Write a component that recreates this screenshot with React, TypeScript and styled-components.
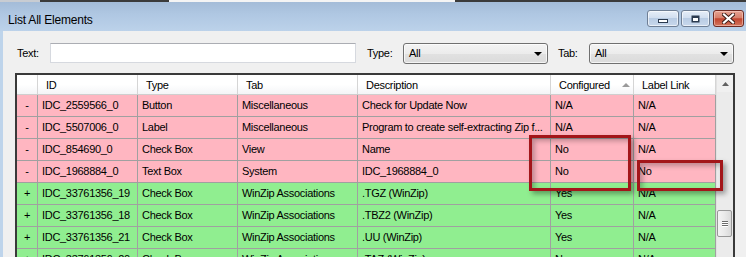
import styled, { createGlobalStyle } from 'styled-components'

const GlobalStyle = createGlobalStyle`
  html, body {
    margin: 0;
    padding: 0;
    overflow: hidden;
    background: #bed4eb;
  }
  body {
    font-family: 'Liberation Sans', Arial, sans-serif;
  }
`

type Row = {
  sign: '-' | '+'
  id: string
  type: string
  tab: string
  desc: string
  configured: string
  link: string
}

const rows: Row[] = [
  { sign: '-', id: 'IDC_2559566_0', type: 'Button', tab: 'Miscellaneous', desc: 'Check for Update Now', configured: 'N/A', link: 'N/A' },
  { sign: '-', id: 'IDC_5507006_0', type: 'Label', tab: 'Miscellaneous', desc: 'Program to create self-extracting Zip f...', configured: 'N/A', link: 'N/A' },
  { sign: '-', id: 'IDC_854690_0', type: 'Check Box', tab: 'View', desc: 'Name', configured: 'No', link: 'N/A' },
  { sign: '-', id: 'IDC_1968884_0', type: 'Text Box', tab: 'System', desc: 'IDC_1968884_0', configured: 'No', link: 'No' },
  { sign: '+', id: 'IDC_33761356_19', type: 'Check Box', tab: 'WinZip Associations', desc: '.TGZ (WinZip)', configured: 'Yes', link: 'N/A' },
  { sign: '+', id: 'IDC_33761356_18', type: 'Check Box', tab: 'WinZip Associations', desc: '.TBZ2 (WinZip)', configured: 'Yes', link: 'N/A' },
  { sign: '+', id: 'IDC_33761356_21', type: 'Check Box', tab: 'WinZip Associations', desc: '.UU (WinZip)', configured: 'Yes', link: 'N/A' },
  { sign: '+', id: 'IDC_33761356_20', type: 'Check Box', tab: 'WinZip Associations', desc: '.TAZ (WinZip)', configured: 'No', link: 'N/A' },
]

const COLS = '21px 100px 100px 120px 193px 83px 82px'

function App () {
  return (
    <>
      <GlobalStyle />
      <Window>
        <TopStrip />
        <TitleBar>
          <Title>List All Elements</Title>
          <CaptionButtons>
            <CaptionButton>
              <svg width="10" height="4" viewBox="0 0 10 4">
                <rect x="0.5" y="0.5" width="9" height="3" fill="#fff" stroke="#2b3a4f" />
              </svg>
            </CaptionButton>
            <CaptionButton narrow>
              <svg width="9" height="8" viewBox="0 0 9 8">
                <rect x="0.5" y="0.5" width="8" height="7" fill="#2b3a4f" />
                <rect x="2" y="3" width="5" height="3" fill="#fff" />
              </svg>
            </CaptionButton>
            <CloseButton>
              <svg width="13" height="11" viewBox="0 0 13 11">
                <path d="M2 1.5 L11 9.5 M11 1.5 L2 9.5" stroke="#3a1a14" strokeWidth="4" strokeLinecap="square" />
                <path d="M2 1.5 L11 9.5 M11 1.5 L2 9.5" stroke="#fff" strokeWidth="2.2" strokeLinecap="square" />
              </svg>
            </CloseButton>
          </CaptionButtons>
        </TitleBar>
        <Client>
          <FilterRow>
            <FieldLabel width={33}>Text:</FieldLabel>
            <TextInput />
            <FieldLabel width={36} gap={11}>Type:</FieldLabel>
            <Combo>
              <span>All</span>
              <ComboArrow />
            </Combo>
            <FieldLabel width={31} gap={10}>Tab:</FieldLabel>
            <Combo>
              <span>All</span>
              <ComboArrow />
            </Combo>
          </FilterRow>

          <TableBox>
            <Grid>
              <HeaderRow>
                <HeaderCell />
                <HeaderCell>ID</HeaderCell>
                <HeaderCell>Type</HeaderCell>
                <HeaderCell>Tab</HeaderCell>
                <HeaderCell>Description</HeaderCell>
                <HeaderCell>
                  Configured
                  <SortGlyph />
                </HeaderCell>
                <HeaderCell>Label Link</HeaderCell>
              </HeaderRow>
              {rows.map((r) => (
                <BodyRow key={r.id} added={r.sign === '+'}>
                  <SignCell>{r.sign}</SignCell>
                  <Cell>{r.id}</Cell>
                  <Cell>{r.type}</Cell>
                  <Cell>{r.tab}</Cell>
                  <Cell>{r.desc}</Cell>
                  <Cell>{r.configured}</Cell>
                  <Cell>{r.link}</Cell>
                </BodyRow>
              ))}
            </Grid>
            <ScrollBar>
              <ScrollButton>
                <svg width="7" height="4" viewBox="0 0 7 4">
                  <path d="M0 4 L3.5 0 L7 4 Z" fill="#606060" />
                </svg>
              </ScrollButton>
              <Track>
                <Thumb>
                  <Grip />
                  <Grip />
                  <Grip />
                </Thumb>
              </Track>
            </ScrollBar>

            <Highlight left={512} top={60} width={102} height={56} />
            <Highlight left={620} top={85} width={86} height={31} />
          </TableBox>
        </Client>
      </Window>
    </>
  )
}

const Window = styled.div`
  position: relative;
  width: 746px;
  height: 257px;
  display: flex;
  flex-direction: column;
  overflow: hidden;
  background: #bed4eb;
`

const TopStrip = styled.div`
  position: absolute;
  top: 0;
  left: 0;
  right: 0;
  height: 2px;
  background: linear-gradient(
    to right,
    #c8ccd2 0px,
    #c8ccd2 40px,
    #3b3b3b 40px,
    #3b3b3b 169px,
    #f4f4f4 169px,
    #f4f4f4 455px,
    #3b3b3b 455px
  );
`

const TitleBar = styled.div`
  height: 31px;
  flex-shrink: 0;
  display: flex;
  align-items: center;
  justify-content: space-between;
  padding: 6px 2px 0 8px;
  box-sizing: border-box;
  background: linear-gradient(180deg, #a2bad6 0%, #afc7e2 45%, #bcd2ea 100%);
`

const Title = styled.div`
  font-size: 12px;
  letter-spacing: -0.2px;
  color: #000;
  padding-top: 3px;
`

const CaptionButtons = styled.div`
  display: flex;
  gap: 2px;
`

const CaptionButton = styled.div<{ narrow?: boolean }>`
  width: ${(p) => (p.narrow ? 29 : 32)}px;
  height: 17px;
  box-sizing: border-box;
  border: 1px solid #6f7f95;
  border-radius: 3px;
  display: flex;
  align-items: center;
  justify-content: center;
  padding-top: ${(p) => (p.narrow ? 0 : 5)}px;
  background: linear-gradient(180deg, #e6eef8 0%, #d2dff0 45%, #b9cce4 50%, #c8d8ec 100%);
  box-shadow: inset 0 0 0 1px rgba(255, 255, 255, 0.6);
`

const CloseButton = styled.div`
  width: 31px;
  height: 17px;
  margin-left: 1px;
  box-sizing: border-box;
  border: 1px solid #6d2a22;
  border-radius: 3px;
  display: flex;
  align-items: center;
  justify-content: center;
  background: linear-gradient(180deg, #e6a393 0%, #d7806c 45%, #c2452f 52%, #d3765e 100%);
  box-shadow: inset 0 0 0 1px rgba(255, 220, 210, 0.5);
`

const Client = styled.div`
  flex: 1;
  margin-left: 3px;
  background: #f0f0f0;
  padding: 12px 0 0 12px;
  box-sizing: border-box;
  font-size: 11px;
  letter-spacing: -0.3px;
  color: #000;
`

const FilterRow = styled.div`
  display: flex;
  align-items: center;
  height: 20px;
  padding-left: 2px;
`

const FieldLabel = styled.div<{ width: number; gap?: number }>`
  width: ${(p) => p.width}px;
  margin-left: ${(p) => p.gap || 0}px;
  flex-shrink: 0;
  font-size: 11px;
`

const TextInput = styled.div`
  width: 306px;
  height: 20px;
  box-sizing: border-box;
  background: #fff;
  border: 1px solid #d6d9df;
  border-top-color: #abadb3;
`

const Combo = styled.div`
  width: 145px;
  height: 21px;
  box-sizing: border-box;
  border: 1px solid #707070;
  border-radius: 3px;
  display: flex;
  align-items: center;
  justify-content: space-between;
  padding: 0 5px 0 5px;
  background: linear-gradient(180deg, #f3f3f3 0%, #ececec 50%, #e1e1e1 51%, #dbdbdb 100%);
  box-shadow: inset 0 0 0 1px rgba(255, 255, 255, 0.7);
`

const ComboArrow = styled.div`
  width: 0;
  height: 0;
  border-left: 4px solid transparent;
  border-right: 4px solid transparent;
  border-top: 4px solid #000;
  margin-top: 1px;
`

const TableBox = styled.div`
  position: relative;
  margin-top: 10px;
  width: 720px;
  height: 200px;
  box-sizing: border-box;
  border: 2px solid #3a3a3a;
  border-bottom: none;
  display: flex;
  background: #fff;
`

const Grid = styled.div`
  width: 699px;
  display: flex;
  flex-direction: column;
`

const HeaderRow = styled.div`
  display: grid;
  grid-template-columns: ${COLS};
  height: 20px;
  box-sizing: border-box;
  border-bottom: 1px solid #cfcfcf;
  background: linear-gradient(180deg, #ffffff 0%, #ffffff 50%, #f4f5f7 100%);
`

const HeaderCell = styled.div`
  display: flex;
  align-items: center;
  padding-left: 8px;
  border-right: 1px solid #d5d5d5;
  white-space: nowrap;
  overflow: hidden;
`

const SortGlyph = styled.span`
  width: 0;
  height: 0;
  margin-left: 12px;
  border-left: 4px solid transparent;
  border-right: 4px solid transparent;
  border-bottom: 4px solid #9a9a9a;
`

const BodyRow = styled.div<{ added: boolean }>`
  display: grid;
  grid-template-columns: ${COLS};
  height: 22px;
  box-sizing: border-box;
  border-bottom: 1px solid #a0a0a0;
  background: ${(p) => (p.added ? '#90ee90' : '#ffb6c1')};
  flex-shrink: 0;
`

const Cell = styled.div`
  line-height: 21px;
  padding-left: 4px;
  border-right: 1px solid #a0a0a0;
  white-space: nowrap;
  overflow: hidden;
`

const SignCell = styled(Cell)`
  padding-left: 0;
  text-align: center;
`

const ScrollBar = styled.div`
  width: 17px;
  display: flex;
  flex-direction: column;
  background: #ebebeb;
  border-left: 1px solid #e2e2e2;
  box-sizing: border-box;
`

const ScrollButton = styled.div`
  height: 17px;
  display: flex;
  align-items: center;
  justify-content: center;
  background: #f0f0f0;
`

const Track = styled.div`
  flex: 1;
  padding: 118px 1px 0 0;
`

const Thumb = styled.div`
  height: 27px;
  box-sizing: border-box;
  border: 1px solid #979797;
  border-radius: 2px;
  display: flex;
  flex-direction: column;
  align-items: center;
  justify-content: center;
  gap: 1px;
  background: linear-gradient(90deg, #f4f4f4 0%, #e9e9e9 50%, #dadada 100%);
`

const Grip = styled.div`
  width: 6px;
  height: 1px;
  background: #6a6a6a;
  box-shadow: 0 1px 0 #ffffff;
`

const Highlight = styled.div<{ left: number; top: number; width: number; height: number }>`
  position: absolute;
  left: ${(p) => p.left}px;
  top: ${(p) => p.top}px;
  width: ${(p) => p.width}px;
  height: ${(p) => p.height}px;
  box-sizing: border-box;
  border: 3px solid #a3161a;
  box-shadow: 3px 3px 5px rgba(0, 0, 0, 0.35), inset 3px 3px 5px rgba(0, 0, 0, 0.25);
  pointer-events: none;
`

export default App
